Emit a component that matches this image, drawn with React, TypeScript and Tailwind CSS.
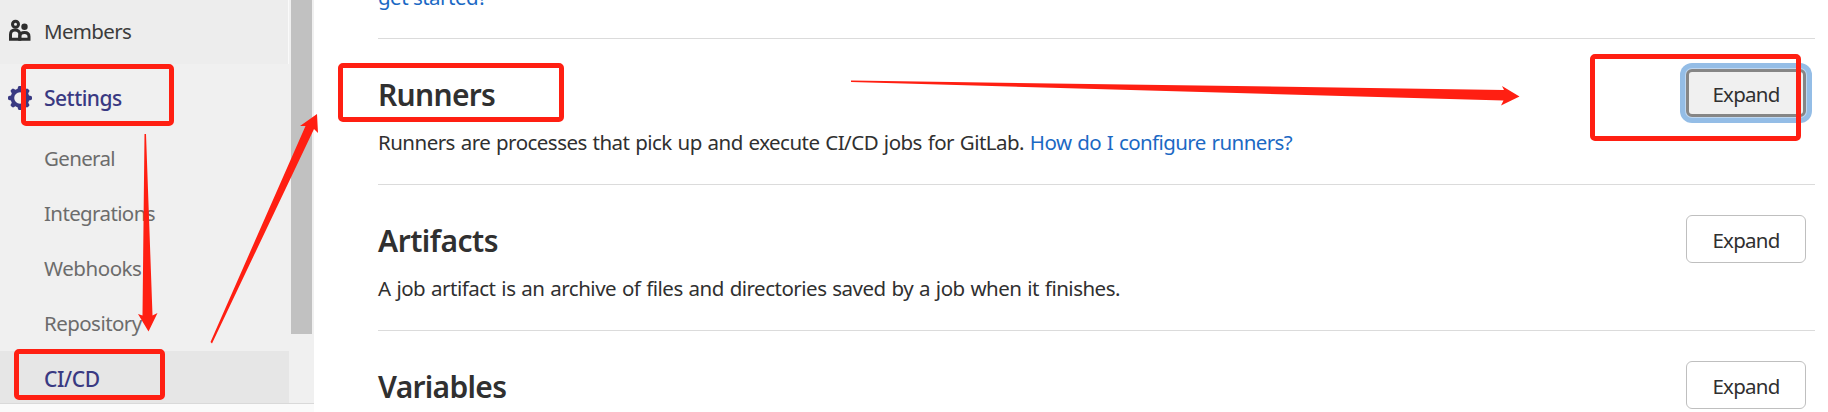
import React from "react";

const subItems = [
  { label: "General", spacing: "tracking-[-0.65px]" },
  { label: "Integrations", spacing: "tracking-[-0.62px]" },
  { label: "Webhooks", spacing: "tracking-[-0.45px]" },
  { label: "Repository", spacing: "tracking-[-0.55px]" },
];

function MembersIcon() {
  return (
    <svg width="24" height="24" viewBox="0 0 24 24" fill="none" stroke="#2e2e2e" className="shrink-0">
      <circle cx="7.5" cy="5.2" r="3" strokeWidth="3" />
      <circle cx="16.5" cy="7.8" r="3.2" fill="#2e2e2e" stroke="none" />
      <path d="M2.5 20.2V15.5Q2.5 11 7 11Q11 11 11.8 14.5V20.2Z" strokeWidth="3" />
      <path d="M11.8 20.2V17Q12.2 13.5 16.5 13.5Q21 13.5 21 17.5V20.2Z" strokeWidth="3" />
    </svg>
  );
}

function GearIcon() {
  return (
    <svg width="24" height="24" viewBox="0 0 24 24" className="shrink-0" fill="#393982">
      <circle cx="12" cy="12" r="7.6" fill="none" stroke="#393982" strokeWidth="3.6" />
      {[0, 45, 90, 135, 180, 225, 270, 315].map((a) => (
        <path key={a} d="M9.2 4L10 0.9Q10.3 0 11.2 0H12.8Q13.7 0 14 0.9L14.8 4Z" transform={`rotate(${a} 12 12)`} />
      ))}
    </svg>
  );
}

function Sidebar() {
  return (
    <aside className="flex h-[412px] w-[314px] shrink-0 flex-col bg-[#fafafa]">
      <div className="flex h-[403px] overflow-hidden bg-[#f0f0f0]">
        <nav className="w-[289px] shrink-0">
          <div className="flex h-16 items-start gap-3 border-r border-[#fafafa] bg-[#ededed] pt-[15px] pl-2">
            <span className="flex h-8 items-center"><MembersIcon /></span>
            <span className="text-[20.5px] leading-8 tracking-[-0.65px] text-[#3c3c3c]">Members</span>
          </div>
          <div className="flex h-[67px] items-center gap-3 pl-2">
            <GearIcon />
            <span className="text-[21px] font-medium leading-8 tracking-[-0.5px] text-[#393982]">Settings</span>
          </div>
          {subItems.map((item) => (
            <div key={item.label} className="flex h-[55px] items-center pb-[2px] pl-[44px] text-[#6c6c6c]">
              <span className={"text-[20.5px] leading-8 " + item.spacing}>{item.label}</span>
            </div>
          ))}
          <div className="flex h-[55px] items-center bg-[#e6e6e6] pl-[44px]">
            <span className="text-[21px] font-medium leading-8 tracking-[-0.35px] text-[#393982]">CI/CD</span>
          </div>
        </nav>
        <div className="ml-[2px] h-[334px] w-[21px] bg-[#c1c1c1]" />
      </div>
      <div className="h-px bg-[#d9d9d9]" />
    </aside>
  );
}

function Section({
  title,
  titleSpacing,
  focused,
  children,
}: {
  title: string;
  titleSpacing: string;
  focused?: boolean;
  children?: React.ReactNode;
}) {
  return (
    <section className="flex h-[146px] shrink-0 items-start justify-between border-b border-[#dbdbdb] pt-[30px] pr-[9px]">
      <div className="pt-[6px]">
        <h4 className={"text-[30px] font-semibold leading-10 text-[#303030] " + titleSpacing}>{title}</h4>
        <p className="mt-[11px] text-[20.5px] leading-8 whitespace-nowrap text-[#303030] [word-spacing:1px]">{children}</p>
      </div>
      <button
        className={
          "h-12 w-[120px] rounded-[6px] pt-[2px] text-[20.5px] leading-8 tracking-[-0.75px] text-[#303030] " +
          (focused
            ? "border-[3px] border-[#868686] bg-[#f0f0f0] shadow-[0_0_0_1px_#bfd7f0,0_0_0_6px_#94bde6]"
            : "border border-[#bfbfbf] bg-white")
        }
      >
        Expand
      </button>
    </section>
  );
}

function Annotations() {
  return (
    <svg
      className="pointer-events-none absolute inset-0"
      width="1828"
      height="412"
      viewBox="0 0 1828 412"
      fill="none"
    >
      <g stroke="#ff1f12" strokeWidth="5">
        <rect x="23.5" y="66.5" width="148" height="57" rx="2.5" />
        <rect x="16.5" y="351.5" width="146" height="46" rx="2.5" />
        <rect x="340.5" y="65.5" width="221" height="54" rx="2.5" />
        <rect x="1592.5" y="56.5" width="206" height="82" rx="2.5" />
      </g>
      <g fill="#ff1f12">
        <path d="M144.5 134H146L152.5 315.5L157.5 313L148.5 331.5L138 314L142.5 315.5Z" />
        <path d="M210.5 342L305.5 126L300 126L317 114L318 133L314 129L212 343.5Z" />
        <path d="M851 80.5L1504 90L1502 86L1519.5 96.5L1501 105.5L1503.5 100.5L851 82Z" />
      </g>
    </svg>
  );
}

export default function App() {
  return (
    <div className="relative flex h-[412px] w-[1828px] overflow-hidden bg-white font-['Noto_Sans','Open_Sans',sans-serif]">
      <Sidebar />
      <main className="flex h-[412px] min-w-0 flex-1 flex-col overflow-hidden pr-[13px] pl-[64px]">
        <div className="flex h-[39px] shrink-0 items-start border-b border-[#dbdbdb]">
          <a className="-mt-[19px] text-[20.5px] leading-8 tracking-[-0.5px] text-[#1b69c4]">get started?</a>
        </div>
        <Section title="Runners" titleSpacing="tracking-[-0.7px]" focused>
          <span className="tracking-[-0.53px]">Runners are processes that pick up and execute CI/CD jobs for GitLab. </span>
          <a className="tracking-[-0.58px] text-[#1b69c4]">How do I configure runners?</a>
        </Section>
        <Section title="Artifacts" titleSpacing="tracking-[-0.5px]">
          <span className="tracking-[-0.5px]">A job artifact is an archive of files and directories saved by a job when it finishes.</span>
        </Section>
        <Section title="Variables" titleSpacing="tracking-[-0.7px]" />
      </main>
      <Annotations />
    </div>
  );
}
